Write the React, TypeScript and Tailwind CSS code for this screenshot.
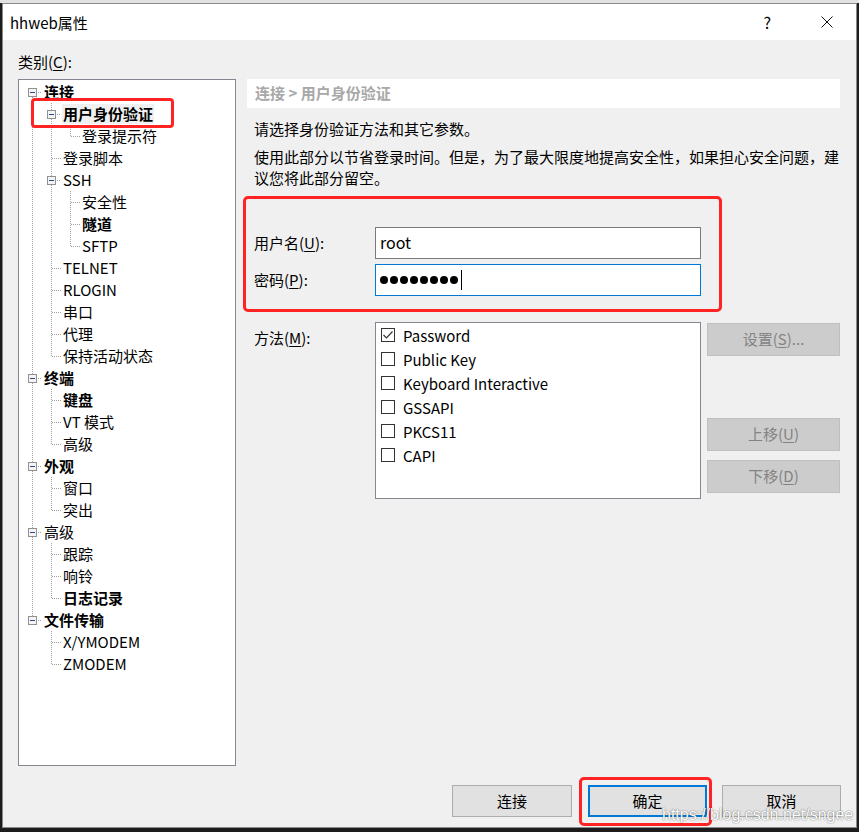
import React from 'react';

type Cell = ' ' | '|' | 'T' | 'L' | 'bF' | 'bT' | 'bL';

interface Row {
  label: string;
  cells: Cell[];
  bold?: boolean;
  selected?: boolean;
}

const rows: Row[] = [
  { label: '连接', cells: ['bF'], bold: true },
  { label: '用户身份验证', cells: ['|', 'bT'], bold: true, selected: true },
  { label: '登录提示符', cells: ['|', '|', 'L'] },
  { label: '登录脚本', cells: ['|', 'T'] },
  { label: 'SSH', cells: ['|', 'bT'] },
  { label: '安全性', cells: ['|', '|', 'T'] },
  { label: '隧道', cells: ['|', '|', 'T'], bold: true },
  { label: 'SFTP', cells: ['|', '|', 'L'] },
  { label: 'TELNET', cells: ['|', 'T'] },
  { label: 'RLOGIN', cells: ['|', 'T'] },
  { label: '串口', cells: ['|', 'T'] },
  { label: '代理', cells: ['|', 'T'] },
  { label: '保持活动状态', cells: ['|', 'L'] },
  { label: '终端', cells: ['bT'], bold: true },
  { label: '键盘', cells: ['|', 'T'], bold: true },
  { label: 'VT 模式', cells: ['|', 'T'] },
  { label: '高级', cells: ['|', 'L'] },
  { label: '外观', cells: ['bT'], bold: true },
  { label: '窗口', cells: ['|', 'T'] },
  { label: '突出', cells: ['|', 'L'] },
  { label: '高级', cells: ['bT'] },
  { label: '跟踪', cells: ['|', 'T'] },
  { label: '响铃', cells: ['|', 'T'] },
  { label: '日志记录', cells: ['|', 'L'], bold: true },
  { label: '文件传输', cells: ['bL'], bold: true },
  { label: 'X/YMODEM', cells: [' ', 'T'] },
  { label: 'ZMODEM', cells: [' ', 'L'] },
];

const methods = [
  { name: 'Password', checked: true },
  { name: 'Public Key', checked: false },
  { name: 'Keyboard Interactive', checked: false },
  { name: 'GSSAPI', checked: false },
  { name: 'PKCS11', checked: false },
  { name: 'CAPI', checked: false },
];

const dot = { stroke: '#a0a0a0', strokeWidth: 1, strokeDasharray: '1 1' };

function TreeCell({ type }: { type: Cell }) {
  const isBox = type === 'bF' || type === 'bT' || type === 'bL';
  return (
    <svg width="19" height="22" viewBox="0 0 19 22" shapeRendering="crispEdges" className="shrink-0">
      {(type === '|' || type === 'T' || type === 'bT') && <line x1="9.5" y1="0" x2="9.5" y2="22" {...dot} />}
      {type === 'L' && <line x1="9.5" y1="0" x2="9.5" y2="11" {...dot} />}
      {type === 'bF' && <line x1="9.5" y1="16" x2="9.5" y2="22" {...dot} />}
      {type === 'bL' && <line x1="9.5" y1="0" x2="9.5" y2="7" {...dot} />}
      {(type === 'T' || type === 'L') && <line x1="10" y1="11.5" x2="19" y2="11.5" {...dot} />}
      {isBox && (
        <>
          <line x1="15" y1="11.5" x2="19" y2="11.5" {...dot} />
          <rect x="5.5" y="7.5" width="8" height="8" fill="#f4f4f4" stroke="#919191" />
          <line x1="7" y1="11.5" x2="12" y2="11.5" stroke="#2a4a8a" strokeWidth="1" />
        </>
      )}
    </svg>
  );
}

function Mn({ k }: { k: string }) {
  return (
    <>
      (<span className="underline underline-offset-2">{k}</span>)
    </>
  );
}

function CheckBox({ checked }: { checked: boolean }) {
  return (
    <svg width="14" height="14" viewBox="0 0 14 14" className="shrink-0">
      <rect x="0.5" y="0.5" width="13" height="13" fill="#fff" stroke="#333" />
      {checked && <polyline points="2.5,7 5.5,10 11.5,3.5" fill="none" stroke="#333" strokeWidth="1.2" />}
    </svg>
  );
}

export default function App() {
  const font = { fontFamily: '"Noto Sans CJK SC", "Noto Sans", sans-serif' };
  return (
    <div className="relative w-[859px] h-[832px] overflow-hidden bg-[#1c1c1c] text-[15px] text-black" style={font}>
      <div className="h-[3px] bg-[#e2e2e2]" />
      <div className="flex">
        <div className="w-[2px]" />
        {/* dialog window */}
        <div className="w-[855px] h-[825px] border border-[#8a8a8a] bg-[#f0f0f0] flex flex-col">
          {/* title bar */}
          <div className="h-[36px] bg-white flex items-center pl-[7px] shrink-0">
            <span className="leading-none">hhweb属性</span>
            <span className="ml-auto mr-[50px] text-[16px] leading-none">?</span>
            <svg width="12" height="12" viewBox="0 0 12 12" className="mr-[23px]">
              <line x1="0.5" y1="0.5" x2="11.5" y2="11.5" stroke="#111" strokeWidth="1" />
              <line x1="11.5" y1="0.5" x2="0.5" y2="11.5" stroke="#111" strokeWidth="1" />
            </svg>
          </div>

          {/* body */}
          <div className="pl-[15px] pt-[12px]">
            <div className="h-[20px] leading-[20px] mb-[7px]">
              类别<Mn k="C" />:
            </div>
            <div className="flex">
              {/* tree */}
              <div className="w-[218px] h-[687px] border border-[#828790] bg-white pt-[1px] pl-[4px] shrink-0">
                {rows.map((r, i) => (
                  <div key={i} className="flex items-center h-[22px]">
                    {r.cells.map((c, j) => (
                      <TreeCell key={j} type={c} />
                    ))}
                    <span
                      className={`ml-[1px] px-[1px] leading-[20px] whitespace-nowrap ${r.bold ? 'font-bold' : ''} ${
                        r.selected ? 'bg-[#f0f0f0]' : ''
                      }`}
                    >
                      {r.label}
                    </span>
                  </div>
                ))}
              </div>

              {/* right panel */}
              <div className="ml-[11px] w-[593px]">
                <div className="h-[29px] bg-white pl-[8px] flex items-center font-bold text-[#a8a8a8]">
                  连接 &gt; 用户身份验证
                </div>
                <p className="mt-[10px] pl-[7px] leading-[21px]">请选择身份验证方法和其它参数。</p>
                <p className="mt-[7px] pl-[7px] leading-[21px] whitespace-nowrap">
                  使用此部分以节省登录时间。但是，为了最大限度地提高安全性，如果担心安全问题，建
                  <br />
                  议您将此部分留空。
                </p>

                <div className="mt-[39px] flex items-center">
                  <div className="w-[128px] pl-[7px]">
                    用户名<Mn k="U" />:
                  </div>
                  <div className="w-[326px] h-[32px] border border-[#7a7a7a] bg-white flex items-center pl-[4px] pb-[2px] text-[16px]">
                    root
                  </div>
                </div>
                <div className="mt-[5px] flex items-center">
                  <div className="w-[128px] pl-[7px]">
                    密码<Mn k="P" />:
                  </div>
                  <div className="w-[326px] h-[32px] border border-[#0078d7] bg-white flex items-center pl-[4px] gap-[2px]">
                    {Array.from({ length: 8 }).map((_, i) => (
                      <span key={i} className="w-[8px] h-[8px] rounded-full bg-black" />
                    ))}
                    <span className="ml-[1px] w-[1px] h-[20px] bg-black" />
                  </div>
                </div>

                <div className="mt-[26px] flex items-start">
                  <div className="w-[128px] pl-[7px] mt-[5px]">
                    方法<Mn k="M" />:
                  </div>
                  <div className="w-[326px] h-[177px] border border-[#828790] bg-white pl-[5px]">
                    {methods.map((m) => (
                      <div key={m.name} className="h-[24px] flex items-center gap-[8px]">
                        <CheckBox checked={m.checked} />
                        <span className="leading-none">{m.name}</span>
                      </div>
                    ))}
                  </div>
                  <div className="ml-[6px] w-[133px] flex flex-col">
                    <div className="mt-[1px] h-[33px] bg-[#cccccc] border border-[#bfbfbf] text-[#838383] flex items-center justify-center">
                      设置<Mn k="S" />...
                    </div>
                    <div className="mt-[62px] h-[33px] bg-[#cccccc] border border-[#bfbfbf] text-[#838383] flex items-center justify-center">
                      上移<Mn k="U" />
                    </div>
                    <div className="mt-[9px] h-[33px] bg-[#cccccc] border border-[#bfbfbf] text-[#838383] flex items-center justify-center">
                      下移<Mn k="D" />
                    </div>
                  </div>
                </div>
              </div>
            </div>

            {/* bottom buttons */}
            <div className="mt-[19px] flex justify-end pr-[15px]">
              <div className="w-[120px] h-[32px] bg-[#e1e1e1] border border-[#adadad] flex items-center justify-center">连接</div>
              <div className="ml-[16px] w-[119px] h-[32px] bg-[#e1e1e1] border-2 border-[#0078d7] flex items-center justify-center">确定</div>
              <div className="ml-[15px] w-[119px] h-[32px] bg-[#e1e1e1] border border-[#adadad] flex items-center justify-center">取消</div>
            </div>
          </div>
        </div>
      </div>

      {/* red annotation boxes */}
      <div className="absolute left-[31px] top-[98px] w-[143px] h-[30px] border-[3px] border-[#ff2323] rounded-[4px]" />
      <div className="absolute left-[243px] top-[196px] w-[479px] h-[116px] border-[3px] border-[#ff2323] rounded-[5px]" />
      <div className="absolute left-[579px] top-[777px] w-[133px] h-[49px] border-[3px] border-[#ff2323] rounded-[5px]" />

      {/* watermark */}
      <div
        className="absolute left-[662px] top-[807px] text-[16px] leading-none text-white whitespace-nowrap"
        style={{
          fontFamily: '"Liberation Sans", Arial, sans-serif',
          textShadow: '0 0 1px rgba(0,0,0,0.55), 0 0 2px rgba(0,0,0,0.25)',
        }}
      >
        https://blog.csdn.net/sngee
      </div>
    </div>
  );
}
